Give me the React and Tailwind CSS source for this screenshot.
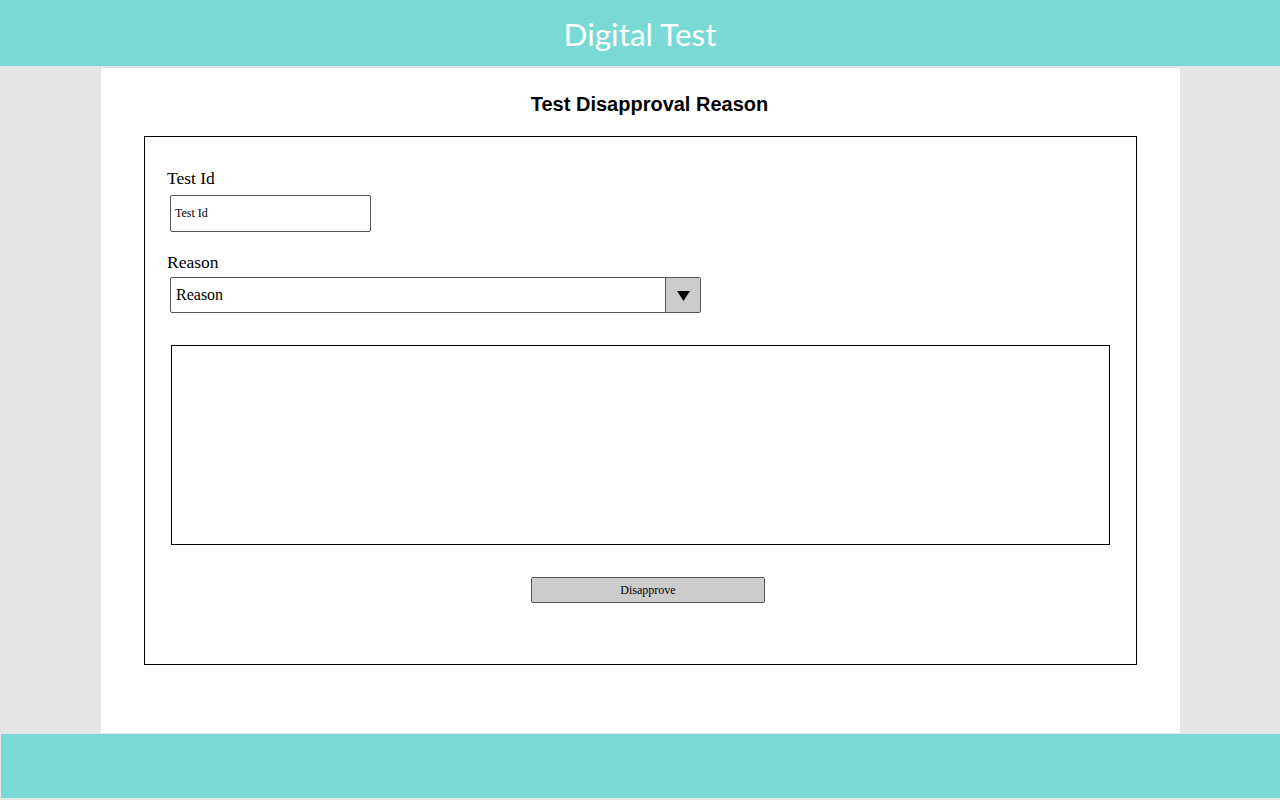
export default function App() {
  return (
    <div className="w-[1280px] h-[800px] bg-[#e6e6e6] flex flex-col overflow-hidden">
      <header className="h-[66px] bg-[#79d9d5] flex items-center justify-center shrink-0">
        <span className="text-white text-[31.5px] pt-[4px]" style={{ fontFamily: "Lato, sans-serif" }}>Digital Test</span>
      </header>
      <main className="mt-[2px] ml-[101px] w-[1079px] h-[665px] bg-white shrink-0 flex flex-col">
        <h1 className="text-[20px] font-bold text-black text-center pl-[18px] pt-[23px] leading-[26px]" style={{ fontFamily: '"Liberation Sans", Arial, sans-serif' }}>
          Test Disapproval Reason
        </h1>
        <div className="ml-[43px] mt-[19px] w-[993px] h-[529px] border border-black flex flex-col" style={{ fontFamily: '"Liberation Serif", "Times New Roman", serif' }}>
          <label className="ml-[22px] mt-[30px] text-[17.5px] leading-[22px] text-black">Test Id</label>
          <div className="ml-[25px] mt-[6px] w-[201px] h-[37px] border border-[#555] rounded-[2px] flex items-center pl-[4px] pb-[1px] text-[12px] text-black">Test Id</div>
          <label className="ml-[22px] mt-[19px] text-[17.5px] leading-[22px] text-black">Reason</label>
          <div className="ml-[25px] mt-[4px] w-[531px] h-[36px] border border-[#555] rounded-[2px] flex">
            <div className="flex-1 flex items-center pl-[5px] text-[16px] text-black">Reason</div>
            <div className="w-[35px] h-full bg-[#cccccc] border-l border-[#555] flex items-center justify-center pt-[1px]">
              <svg width="13" height="10" viewBox="0 0 13 10"><path d="M0 0 L13 0 L6.5 10 Z" fill="#000" /></svg>
            </div>
          </div>
          <div className="ml-[26px] mt-[32px] w-[939px] h-[200px] border border-black"></div>
          <div className="flex mt-[32px]">
            <button className="ml-[386px] w-[234px] h-[26px] bg-[#cccccc] border border-[#555] rounded-[2px] text-[12px] text-black flex items-center justify-center" style={{ fontFamily: '"Liberation Serif", "Times New Roman", serif' }}>
              Disapprove
            </button>
          </div>
        </div>
      </main>
      <footer className="mt-[1px] ml-[1px] h-[64px] bg-[#79d9d5] shrink-0"></footer>
    </div>
  );
}
